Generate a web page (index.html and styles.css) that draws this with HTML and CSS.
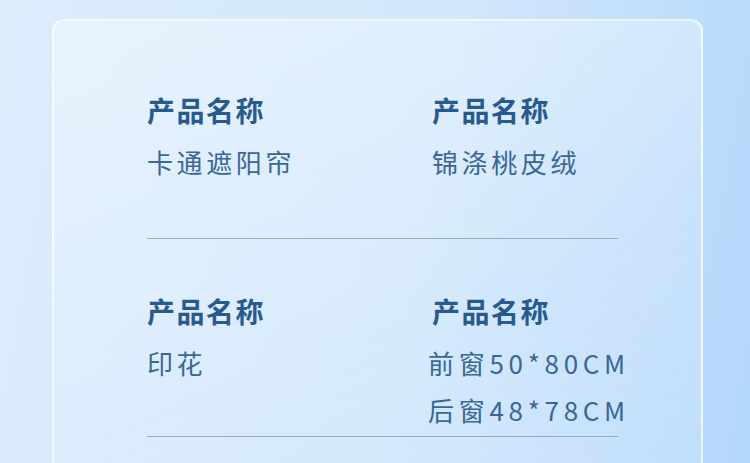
FILE: index.html
```html
<!DOCTYPE html>
<html lang="zh-CN">
<head>
    <meta charset="UTF-8">
    <meta name="viewport" content="width=device-width, initial-scale=1.0">
    <title>产品参数</title>
    <link rel="stylesheet" href="styles.css">
</head>
<body>
    <div class="spec-card">
        <div class="spec-row">
            <div class="spec-item">
                <h2 class="spec-title">产品名称</h2>
                <p class="spec-value">卡通遮阳帘</p>
            </div>
            <div class="spec-item">
                <h2 class="spec-title">产品名称</h2>
                <p class="spec-value">锦涤桃皮绒</p>
            </div>
        </div>
        <hr class="spec-divider">
        <div class="spec-row">
            <div class="spec-item">
                <h2 class="spec-title">产品名称</h2>
                <p class="spec-value">印花</p>
            </div>
            <div class="spec-item">
                <h2 class="spec-title">产品名称</h2>
                <p class="spec-value size">前窗50*80CM</p>
                <p class="spec-value size">后窗48*78CM</p>
            </div>
        </div>
        <hr class="spec-divider">
    </div>
</body>
</html>
```

FILE: styles.css
```css
body {
    margin: 0;
    height: 463px;
    overflow: hidden;
    font-family: "Noto Sans CJK SC", "Noto Sans", sans-serif;
    background: linear-gradient(100deg, #dcedfc 0%, #d2e7fc 55%, #b3d7fb 100%);
}

.spec-card {
    margin: 19px 0 0 52px;
    width: 651px;
    height: 480px;
    padding: 69px 0 0 91px;
    box-sizing: border-box;
    border: 2px solid rgba(255, 255, 255, 0.65);
    border-radius: 12px;
    background: linear-gradient(160deg, rgba(240, 248, 255, 0.6) 0%, rgba(225, 240, 254, 0.35) 60%, rgba(215, 234, 253, 0.3) 100%);
}

.spec-row {
    display: grid;
    grid-template-columns: 285px 285px;
    height: 148px;
    padding-left: 2px;
}

.spec-divider + .spec-row {
    padding-top: 52px;
    height: 145px;
}

.spec-title {
    margin: 0;
    font-size: 28px;
    line-height: 40px;
    font-weight: bold;
    letter-spacing: 1.5px;
    color: #295a8d;
}

.spec-value {
    margin: 8px 0 0;
    font-size: 26px;
    line-height: 47px;
    font-weight: normal;
    letter-spacing: 3.6px;
    color: #3a6796;
}

.spec-value + .spec-value {
    margin-top: 0;
}

.spec-value.size {
    margin-left: -4px;
    letter-spacing: 4.7px;
}

.spec-divider {
    width: 471px;
    margin: 0 0 0 2px;
    border: none;
    border-top: 1px solid #97adbd;
}
```
